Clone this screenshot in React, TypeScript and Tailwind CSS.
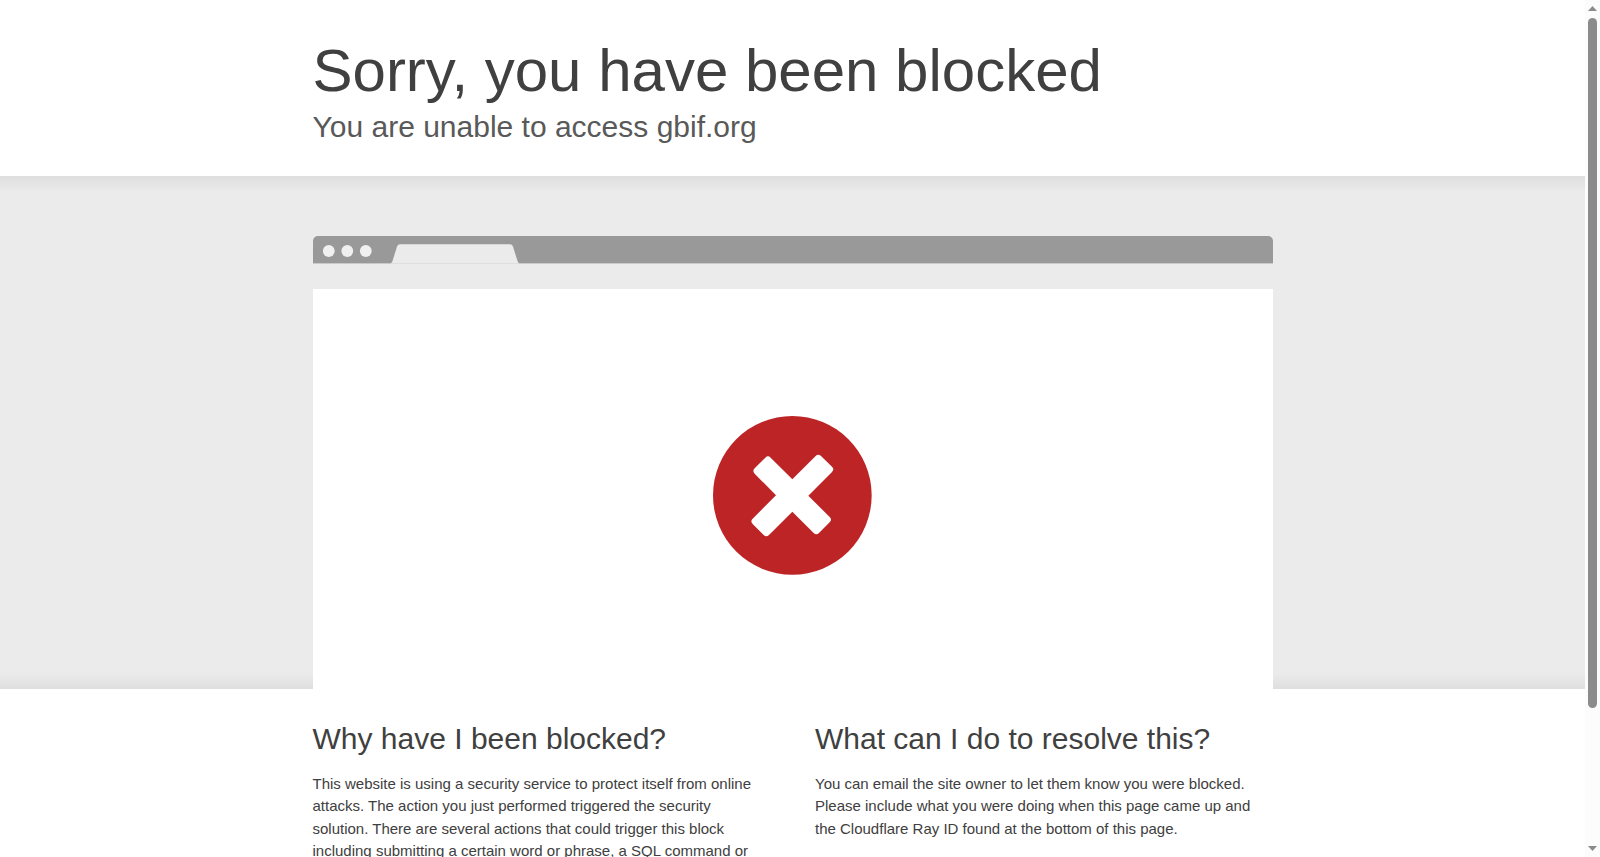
import type { ReactNode } from 'react';

const COLUMNS = [
  {
    title: 'Why have I been blocked?',
    text: 'This website is using a security service to protect itself from online attacks. The action you just performed triggered the security solution. There are several actions that could trigger this block including submitting a certain word or phrase, a SQL command or malformed data.',
  },
  {
    title: 'What can I do to resolve this?',
    text: 'You can email the site owner to let them know you were blocked. Please include what you were doing when this page came up and the Cloudflare Ray ID found at the bottom of this page.',
  },
];

function Wrapper({ children }: { children: ReactNode }) {
  return <div className="mx-auto w-full max-w-[960px]">{children}</div>;
}

function BlockedIcon() {
  return (
    <svg className="size-[159px]" viewBox="0 0 477 477" aria-hidden="true">
      <circle cx="238" cy="238" r="238" fill="#bd2426" />
      <path
        fill="#fff"
        d="M238 190 L173 125 Q165 117 157 125 L125 157 Q117 165 125 173 L189 238 L119 308 Q111 316 119 324 L152 357 Q160 365 168 357 L238 287 L302 351 Q310 359 318 351 L350 319 Q358 311 350 303 L286 239 L357 168 Q365 160 357 152 L324 120 Q316 112 308 120 Z"
      />
    </svg>
  );
}

function BrowserBar() {
  return (
    <div className="flex h-7 items-end rounded-t-[5px] border-b border-[#c9c9c9] bg-[#999]">
      <svg className="ml-[10px] h-5 w-[50px]" viewBox="0 0 50 20" fill="#f0f0f0" aria-hidden="true">
        <circle cx="5.800" cy="8" r="5.900" />
        <circle cx="24.300" cy="8" r="5.900" />
        <circle cx="42.800" cy="8" r="5.900" />
      </svg>
      <svg className="-mb-px ml-[18px] h-5 w-32" viewBox="0 0 128 20" aria-hidden="true">
        <path fill="#ebebeb" d="M0 19 Q1 18.600 1.500 17 L6 2.500 Q7 0.300 9 0.300 H119 Q121 0.300 122 2.500 L126.500 17 Q127 18.600 128 19 Z" />
        <path fill="#dedede" d="M0 19 H128 V20 H0 Z" />
      </svg>
    </div>
  );
}

// Vertical scroll rail on the right edge of the window
function ScrollRail() {
  return (
    <div className="flex w-[15px] shrink-0 flex-col items-center bg-[#fcfcfc] py-[6px]" aria-hidden="true">
      <svg className="h-[5px] w-[9px]" viewBox="0 0 9 5">
        <path fill="#8b8b8b" d="M4.500 0 L9 5 H0 Z" />
      </svg>
      <div className="my-[7px] flex w-full flex-1 justify-center">
        <div className="h-[84%] w-[9px] rounded-full bg-[#8b8b8b]" />
      </div>
      <svg className="h-[5px] w-[9px]" viewBox="0 0 9 5">
        <path fill="#8b8b8b" d="M0 0 H9 L4.500 5 Z" />
      </svg>
    </div>
  );
}

export default function App() {
  return (
    <div className="flex h-screen overflow-hidden bg-white font-['Liberation_Sans',Arial,sans-serif] text-[15px] leading-normal text-[#404040]">
      <main className="min-w-0 flex-1 overflow-x-hidden overflow-y-auto [scrollbar-width:none]">
        <header className="pt-[33px] pb-[31px]">
          <Wrapper>
            <h1 className="text-[60px] leading-[76px]">Sorry, you have been blocked</h1>
            <h2 className="text-[30px] leading-[36px] text-[#595959]">You are unable to access gbif.org</h2>
          </Wrapper>
        </header>

        {/* Browser illustration */}
        <section className="bg-[#ebebeb] bg-[linear-gradient(to_bottom,#dedede,#ebebeb_16px,#ebebeb_calc(100%-16px),#dedede)] pt-[60px]">
          <Wrapper>
            <BrowserBar />
            <div className="mt-[25px] flex justify-center bg-white pt-[127px] pb-[114px]">
              <BlockedIcon />
            </div>
          </Wrapper>
        </section>

        <section className="pt-[31px] pb-8">
          <Wrapper>
            <div className="grid grid-cols-2 gap-[45px]">
              {COLUMNS.map((col) => (
                <div key={col.title}>
                  <h2 className="mb-[15px] text-[30px] leading-tight">{col.title}</h2>
                  <p>{col.text}</p>
                </div>
              ))}
            </div>
          </Wrapper>
        </section>
      </main>
      <ScrollRail />
    </div>
  );
}
